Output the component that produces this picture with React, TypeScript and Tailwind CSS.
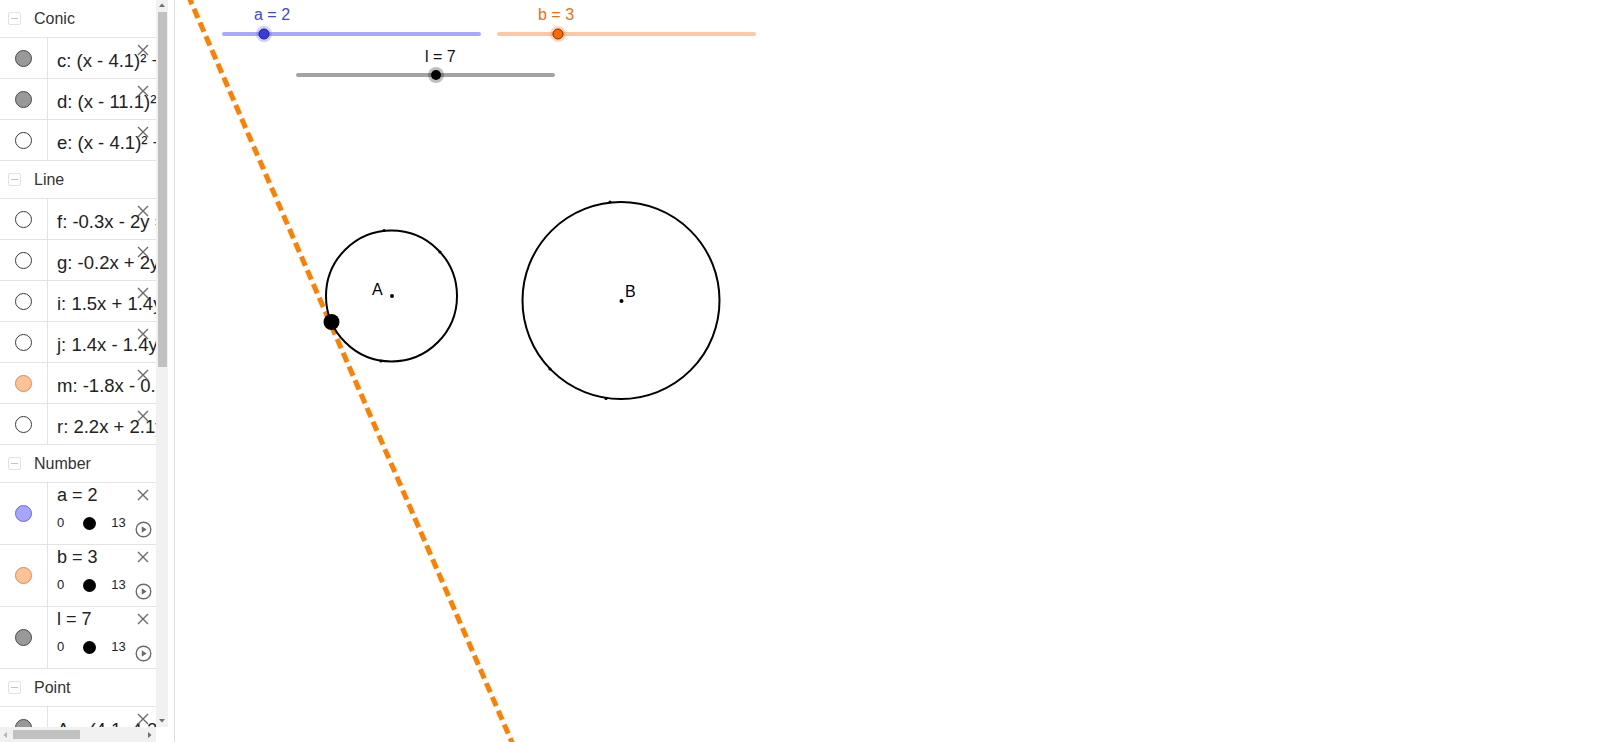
import React from "react";

const FONT = { fontFamily: '"Liberation Sans", Arial, sans-serif' };

function XIcon() {
  return (
    <svg width="12" height="12" viewBox="0 0 12 12" className="block">
      <path d="M1 1 L11 11 M11 1 L1 11" stroke="#6b6b6b" strokeWidth="1.4" fill="none" />
    </svg>
  );
}

function PlayIcon() {
  return (
    <svg width="17" height="17" viewBox="0 0 17 17" className="block">
      <circle cx="8.5" cy="8.5" r="7.3" stroke="#6b6b6b" strokeWidth="1.4" fill="white" />
      <path d="M6.8 5.3 L11.6 8.5 L6.8 11.7 Z" fill="#6b6b6b" />
    </svg>
  );
}

function Header({ label }: { label: string }) {
  return (
    <div className="flex h-[38px] shrink-0 items-center border-b border-[#e3e3e3]">
      <div className="ml-[8px] flex h-[13px] w-[13px] items-center justify-center rounded-[2px] border border-[#e2e2e2]">
        <div className="h-[1px] w-[7px] bg-[#c4c4c4]" />
      </div>
      <span className="ml-[13px] text-[16px] text-[#333333]">{label}</span>
    </div>
  );
}

type Dot = { fill: string; border: string };
const WHITE: Dot = { fill: "#ffffff", border: "#3a3a3a" };
const GRAY: Dot = { fill: "#999999", border: "#4a4a4a" };
const ORANGE: Dot = { fill: "#ffc297", border: "#d9895a" };
const BLUE: Dot = { fill: "#a6a6ff", border: "#6a6ad6" };

function ColorDot({ d }: { d: Dot }) {
  return (
    <div
      className="h-[17px] w-[17px] rounded-full border"
      style={{ backgroundColor: d.fill, borderColor: d.border }}
    />
  );
}

function Row({ d, text }: { d: Dot; text: string }) {
  return (
    <div className="flex h-[41px] shrink-0 border-b border-[#e3e3e3]">
      <div className="flex w-[48px] shrink-0 items-center justify-center border-r border-[#e3e3e3]">
        <ColorDot d={d} />
      </div>
      <div className="relative flex-1 overflow-hidden whitespace-nowrap pl-[9px] pt-[12px] text-[18.5px] leading-[22px] text-[#222222]">
        {text}
        <div className="absolute right-[7px] top-[6px]">
          <XIcon />
        </div>
      </div>
    </div>
  );
}

function NumberRow({ d, text }: { d: Dot; text: string }) {
  return (
    <div className="flex h-[62px] shrink-0 border-b border-[#e3e3e3]">
      <div className="flex w-[48px] shrink-0 items-center justify-center border-r border-[#e3e3e3]">
        <ColorDot d={d} />
      </div>
      <div className="relative flex-1 overflow-hidden whitespace-nowrap pl-[9px] text-[#222222]">
        <div className="pt-[1px] text-[18px] leading-[22px]">{text}</div>
        <div className="mt-[10px] flex items-center text-[13px] leading-[14px]">
          <span>0</span>
          <div className="ml-[19px] h-[13px] w-[13px] rounded-full bg-black" />
          <span className="ml-[15px]">13</span>
        </div>
        <div className="absolute right-[7px] top-[6px]">
          <XIcon />
        </div>
        <div className="absolute right-[4px] top-[38px]">
          <PlayIcon />
        </div>
      </div>
    </div>
  );
}

function Arrow({ dir }: { dir: "up" | "down" | "left" | "right" }) {
  const p =
    dir === "up"
      ? "M1 5 L4 1.5 L7 5 Z"
      : dir === "down"
      ? "M1 2 L4 5.5 L7 2 Z"
      : dir === "left"
      ? "M5 1 L1.5 4 L5 7 Z"
      : "M2 1 L5.5 4 L2 7 Z";
  return (
    <svg width="8" height="8" viewBox="0 0 8 8" className="block">
      <path d={p} fill={dir === "left" ? "#b5b5b5" : "#6e6e6e"} />
    </svg>
  );
}

function Sidebar() {
  return (
    <div className="flex h-[742px] w-[175px] shrink-0 border-r border-[#e0e0e0] bg-white">
      <div className="flex w-[156px] shrink-0 flex-col">
        <div className="flex h-[727px] flex-col overflow-hidden">
          <Header label="Conic" />
          <Row d={GRAY} text="c: (x - 4.1)² + (y - 4.22)² = 4" />
          <Row d={GRAY} text="d: (x - 11.1)² + (y - 4.1)² = 9" />
          <Row d={WHITE} text="e: (x - 4.1)² + (y - 4.22)² = 49" />
          <Header label="Line" />
          <Row d={WHITE} text="f: -0.3x - 2y = -9.68" />
          <Row d={WHITE} text="g: -0.2x + 2y = 7.6" />
          <Row d={WHITE} text="i: 1.5x + 1.4y = 18.3" />
          <Row d={WHITE} text="j: 1.4x - 1.4y = 1.7" />
          <Row d={ORANGE} text="m: -1.8x - 0.8y = -14.3" />
          <Row d={WHITE} text="r: 2.2x + 2.1y = 22.4" />
          <Header label="Number" />
          <NumberRow d={BLUE} text="a = 2" />
          <NumberRow d={ORANGE} text="b = 3" />
          <NumberRow d={GRAY} text="l = 7" />
          <Header label="Point" />
          <Row d={GRAY} text="A = (4.1, 4.22)" />
        </div>
        <div className="flex h-[15px] shrink-0 items-center bg-[#f1f1f1]">
          <div className="flex w-[12px] justify-center">
            <Arrow dir="left" />
          </div>
          <div className="ml-[1px] h-[9px] w-[67px] bg-[#c1c1c1]" />
          <div className="flex-1" />
          <div className="flex w-[12px] justify-center">
            <Arrow dir="right" />
          </div>
        </div>
      </div>
      <div className="flex h-[727px] w-[12px] shrink-0 flex-col items-center bg-[#f1f1f1]">
        <div className="flex h-[12px] items-center">
          <Arrow dir="up" />
        </div>
        <div className="h-[355px] w-[9px] bg-[#c1c1c1]" />
        <div className="flex-1" />
        <div className="flex h-[12px] items-center">
          <Arrow dir="down" />
        </div>
      </div>
    </div>
  );
}

function Canvas() {
  return (
    <div className="relative h-[742px] flex-1 overflow-hidden bg-white">
      <svg
        width={1425}
        height={742}
        viewBox="175 0 1425 742"
        className="absolute left-0 top-0"
        style={FONT}
      >
        {/* sliders */}
        <line x1={224} y1={34} x2={479} y2={34} stroke="#a8a8ff" strokeWidth={4} strokeLinecap="round" />
        <circle cx={264} cy={34} r={8} fill="#5c5cff" opacity={0.3} />
        <circle cx={264} cy={34} r={5} fill="#3b3bd8" stroke="#202080" strokeWidth={1} />
        <text x={254} y={20} fontSize={16} fill="#4646d4">a = 2</text>

        <line x1={499} y1={34} x2={754} y2={34} stroke="#ffc8a2" strokeWidth={4} strokeLinecap="round" />
        <circle cx={558} cy={34} r={8} fill="#ff7a1a" opacity={0.3} />
        <circle cx={558} cy={34} r={5} fill="#ff6a00" stroke="#7a3000" strokeWidth={1} />
        <text x={538} y={20} fontSize={16} fill="#e8720c">b = 3</text>

        <line x1={298} y1={75} x2={553} y2={75} stroke="#a3a3a3" strokeWidth={4} strokeLinecap="round" />
        <circle cx={436} cy={75} r={8} fill="#000000" opacity={0.25} />
        <circle cx={436} cy={75} r={5} fill="#000000" />
        <text x={425} y={62} fontSize={16} fill="#111111">l = 7</text>

        {/* orange dashed tangent line */}
        <line
          x1={188}
          y1={-5}
          x2={514}
          y2={747}
          stroke="#ff8000"
          strokeWidth={5}
          strokeDasharray="10 5"
        />

        {/* circles */}
        <circle cx={391.5} cy={296} r={65.5} fill="none" stroke="#000" strokeWidth={2} />
        <circle cx={621} cy={300.5} r={98.5} fill="none" stroke="#000" strokeWidth={2} />

        {/* tick points */}
        <circle cx={384} cy={230.5} r={1.6} fill="#000" />
        <circle cx={440} cy={252} r={1.6} fill="#000" />
        <circle cx={381} cy={361} r={1.6} fill="#000" />
        <circle cx={610} cy={202} r={1.6} fill="#000" />
        <circle cx={550} cy={369} r={1.6} fill="#000" />
        <circle cx={606} cy={398.5} r={1.6} fill="#000" />

        {/* centers */}
        <circle cx={392} cy={296} r={2} fill="#000" />
        <circle cx={621.5} cy={301} r={2} fill="#000" />
        <text x={372} y={295} fontSize={16} fill="#000">A</text>
        <text x={625} y={297} fontSize={16} fill="#000">B</text>

        {/* tangent point */}
        <circle cx={331.5} cy={322} r={8} fill="#000" />
      </svg>
    </div>
  );
}

export default function App() {
  return (
    <div className="flex h-[742px] w-[1600px] overflow-hidden bg-white" style={FONT}>
      <Sidebar />
      <Canvas />
    </div>
  );
}
